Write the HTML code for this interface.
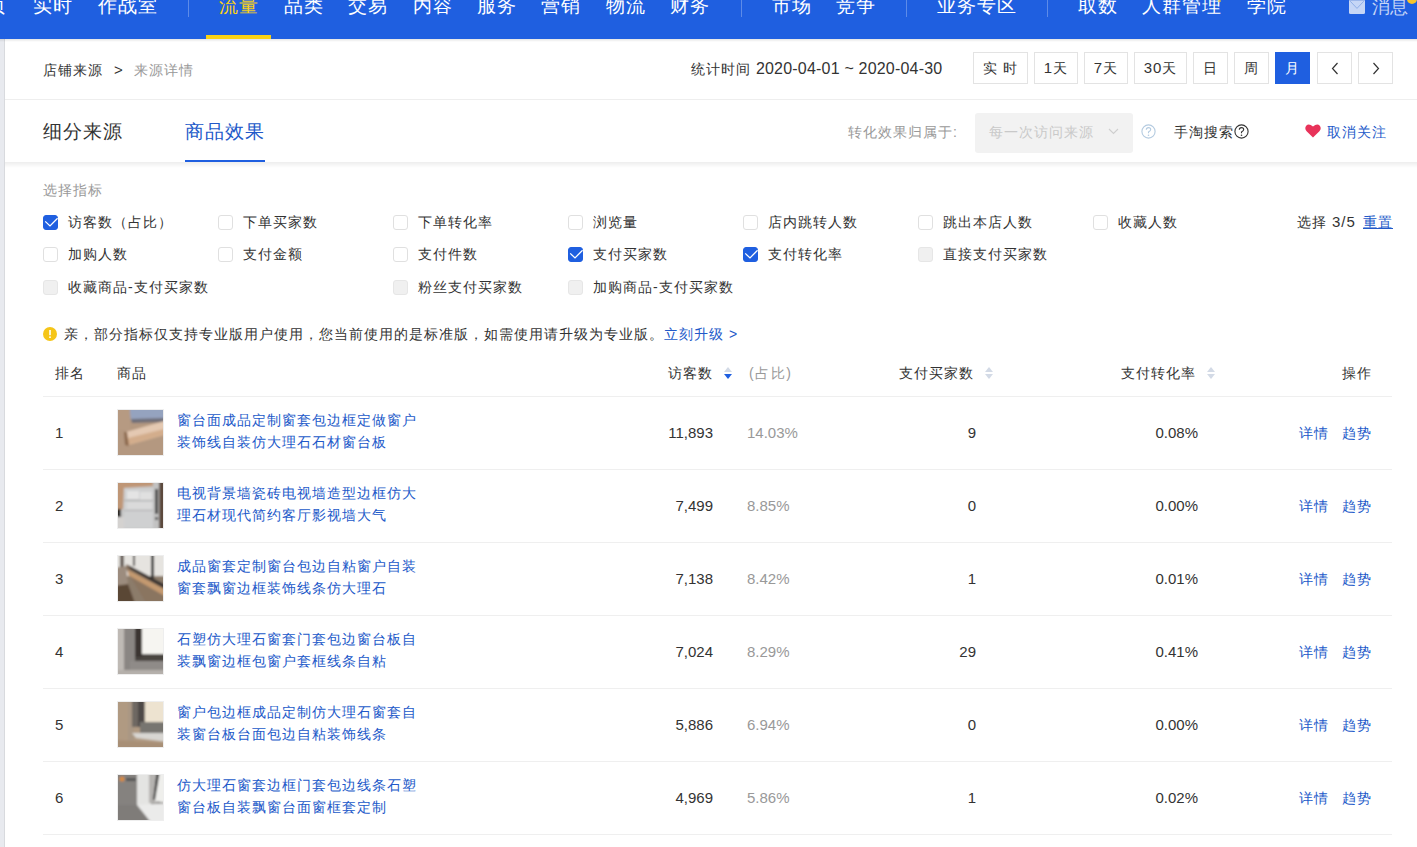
<!DOCTYPE html>
<html><head><meta charset="utf-8">
<style>
*{box-sizing:border-box;margin:0;padding:0}
html,body{width:1417px;height:847px;overflow:hidden;background:#fff;font-family:"Liberation Sans",sans-serif;color:#333}
.a{position:absolute;white-space:nowrap}
.c{font-size:14px;letter-spacing:1px;line-height:20px}
.n{font-size:15px;line-height:20px}
#nav{position:absolute;left:0;top:0;width:1417px;height:39px;background:#1f5fe0;z-index:5}
#nav .t{position:absolute;top:-6px;font-size:19px;letter-spacing:1px;line-height:24px;color:#fff;white-space:nowrap}
#nav .d{position:absolute;top:0;width:1px;height:17px;background:rgba(255,255,255,.28)}
#strip{position:absolute;left:0;top:39px;width:5px;height:808px;background:#e8eaef;border-right:1px solid #d8dade}
.btn{position:absolute;top:52px;height:32px;border:1px solid #e3e3e3;background:#fff;text-align:center;color:#333;line-height:30px}
.cb{position:absolute;width:15px;height:15px;border:1px solid #e0e0e0;border-radius:3px;background:#fff}
.cb.on{background:#1f5fe0;border-color:#1f5fe0}
.cb.dis{background:#f0f0f0;border-color:#e6e6e6}
.gry{color:#999}
.lnk{color:#2259c9}
.row{position:absolute;left:43px;width:1349px;height:1px;background:#efefef}
.ttl{position:absolute;left:177px;font-size:14px;letter-spacing:1px;line-height:21.5px;color:#2259c9;white-space:nowrap}
.img{position:absolute;left:117px;width:47px;height:47px;border:1px solid #eee;overflow:hidden}
.sort{position:absolute;width:8px;height:13px}
</style></head><body>
<div id="nav">
<div class="t" style="left:-13px">页</div>
<div class="t" style="left:33px">实时</div>
<div class="t" style="left:98px">作战室</div>
<div class="d" style="left:188px"></div>
<div class="t" style="left:219px;color:#fad214">流量</div>
<div class="t" style="left:284px">品类</div>
<div class="t" style="left:348px">交易</div>
<div class="t" style="left:413px">内容</div>
<div class="t" style="left:477px">服务</div>
<div class="t" style="left:541px">营销</div>
<div class="t" style="left:606px">物流</div>
<div class="t" style="left:670px">财务</div>
<div class="d" style="left:741px"></div>
<div class="t" style="left:772px">市场</div>
<div class="t" style="left:836px">竞争</div>
<div class="d" style="left:906px"></div>
<div class="t" style="left:937px">业务专区</div>
<div class="d" style="left:1047px"></div>
<div class="t" style="left:1078px">取数</div>
<div class="t" style="left:1142px">人群管理</div>
<div class="t" style="left:1247px">学院</div>
<div style="position:absolute;left:206px;top:35px;width:65px;height:4px;background:#fad214"></div>
<svg style="position:absolute;left:1349px;top:0" width="16" height="14" viewBox="0 0 16 14"><path d="M0 0 H16 V12.5 Q16 14 14.5 14 H1.5 Q0 14 0 12.5Z" fill="#c6d6f6"/><rect x="0" y="0" width="16" height="1" fill="#9db7ea"/><path d="M1.2 1.2 L8 8.4 L14.8 1.2" fill="none" stroke="#8eaee8" stroke-width="1"/></svg>
<div class="t" style="left:1372px;top:-5px;font-size:18px;letter-spacing:0;color:#c6d6f6">消息</div>
<div style="position:absolute;left:1407px;top:-6px;width:10px;height:10px;border-radius:50%;background:#f7c52b"></div>
<div style="position:absolute;left:1218px;top:0;width:3px;height:2px;border-radius:1px;background:#e8c43a;opacity:.8"></div>
</div>
<div style="position:absolute;left:0;top:39px;width:1417px;height:3px;background:linear-gradient(rgba(0,0,0,.10),rgba(0,0,0,0));z-index:4"></div>
<div id="strip"></div>
<div class="a c" style="left:43px;top:60px">店铺来源</div>
<div class="a n" style="left:114px;top:60px">&gt;</div>
<div class="a c gry" style="left:134px;top:60px">来源详情</div>
<div class="a c" style="left:691px;top:59px">统计时间 <span style="font-size:16px;letter-spacing:.2px">2020-04-01 ~ 2020-04-30</span></div>
<div class="btn" style="left:973px;width:55px"><span class="c" style="line-height:30px">实&nbsp;时</span></div>
<div class="btn" style="left:1034px;width:44px"><span class="c" style="line-height:30px"><span class="n">1</span>天</span></div>
<div class="btn" style="left:1084px;width:44px"><span class="c" style="line-height:30px"><span class="n">7</span>天</span></div>
<div class="btn" style="left:1134px;width:53px"><span class="c" style="line-height:30px"><span class="n">30</span>天</span></div>
<div class="btn" style="left:1193px;width:35px"><span class="c" style="line-height:30px">日</span></div>
<div class="btn" style="left:1234px;width:35px"><span class="c" style="line-height:30px">周</span></div>
<div class="btn" style="left:1275px;width:35px;background:#1f5fe0;border-color:#1f5fe0;color:#fff"><span class="c" style="line-height:30px">月</span></div>
<div class="btn" style="left:1317px;width:35px"><svg width="8" height="13" style="position:absolute;left:13px;top:9px"><path d="M6.5 1 L1.5 6.5 L6.5 12" fill="none" stroke="#333" stroke-width="1.2"/></svg></div>
<div class="btn" style="left:1358px;width:35px"><svg width="8" height="13" style="position:absolute;left:13px;top:9px"><path d="M1.5 1 L6.5 6.5 L1.5 12" fill="none" stroke="#333" stroke-width="1.2"/></svg></div>
<div style="position:absolute;left:5px;top:99px;width:1412px;height:1px;background:#eeeeee"></div>
<div class="a" style="left:43px;top:118px;font-size:19px;letter-spacing:1px;line-height:28px;color:#333">细分来源</div>
<div class="a" style="left:185px;top:118px;font-size:19px;letter-spacing:1px;line-height:28px;color:#2259c9">商品效果</div>
<div style="position:absolute;left:185px;top:160px;width:80px;height:2px;background:#1f5fe0;z-index:2"></div>
<div style="position:absolute;left:5px;top:162px;width:1412px;height:6px;background:linear-gradient(rgba(0,0,0,.07),rgba(0,0,0,0))"></div>
<div class="a c gry" style="left:848px;top:122px">转化效果归属于:</div>
<div style="position:absolute;left:975px;top:113px;width:158px;height:40px;background:#f2f2f2;border-radius:3px"></div>
<div class="a c" style="left:989px;top:122px;color:#c9c9c9">每一次访问来源</div>
<svg style="position:absolute;left:1108px;top:128px" width="11" height="7"><path d="M1 1 L5.5 5.5 L10 1" fill="none" stroke="#cfcfcf" stroke-width="1.1"/></svg>
<svg style="position:absolute;left:1141px;top:124px" width="15" height="15" viewBox="0 0 15 15"><circle cx="7.5" cy="7.5" r="6.6" fill="none" stroke="#b4cbe0" stroke-width="1.1"/><path d="M5.3 5.8 Q5.3 3.6 7.5 3.6 Q9.7 3.6 9.7 5.6 Q9.7 6.9 7.5 7.9 V9.2" fill="none" stroke="#b4cbe0" stroke-width="1.1"/><circle cx="7.5" cy="11.2" r=".8" fill="#b4cbe0"/></svg>
<div class="a c" style="left:1174px;top:122px">手淘搜索</div>
<svg style="position:absolute;left:1234px;top:124px" width="15" height="15" viewBox="0 0 15 15"><circle cx="7.5" cy="7.5" r="6.6" fill="none" stroke="#333" stroke-width="1.1"/><path d="M5.3 5.8 Q5.3 3.6 7.5 3.6 Q9.7 3.6 9.7 5.6 Q9.7 6.9 7.5 7.9 V9.2" fill="none" stroke="#333" stroke-width="1.1"/><circle cx="7.5" cy="11.2" r=".8" fill="#333"/></svg>
<svg style="position:absolute;left:1305px;top:124px" width="16" height="14" viewBox="0 0 16 14"><path d="M8 13.5 L1.6 7.2 Q-.8 4.6 1.2 1.8 Q3.8 -1 8 2.6 Q12.2 -1 14.8 1.8 Q16.8 4.6 14.4 7.2Z" fill="#e8335a"/></svg>
<div class="a c lnk" style="left:1327px;top:122px">取消关注</div>
<div class="a c gry" style="left:43px;top:180px">选择指标</div>
<div class="cb on" style="left:43px;top:215px"><svg width="15" height="15" style="position:absolute;left:-1px;top:-1px"><path d="M2.2 6.4 L7 10.9 L14.6 3.3" fill="none" stroke="#fff" stroke-width="1.3"/></svg></div><div class="a c" style="left:68px;top:212px">访客数（占比）</div>
<div class="cb " style="left:218px;top:215px"></div><div class="a c" style="left:243px;top:212px">下单买家数</div>
<div class="cb " style="left:393px;top:215px"></div><div class="a c" style="left:418px;top:212px">下单转化率</div>
<div class="cb " style="left:568px;top:215px"></div><div class="a c" style="left:593px;top:212px">浏览量</div>
<div class="cb " style="left:743px;top:215px"></div><div class="a c" style="left:768px;top:212px">店内跳转人数</div>
<div class="cb " style="left:918px;top:215px"></div><div class="a c" style="left:943px;top:212px">跳出本店人数</div>
<div class="cb " style="left:1093px;top:215px"></div><div class="a c" style="left:1118px;top:212px">收藏人数</div>
<div class="cb " style="left:43px;top:247px"></div><div class="a c" style="left:68px;top:244px">加购人数</div>
<div class="cb " style="left:218px;top:247px"></div><div class="a c" style="left:243px;top:244px">支付金额</div>
<div class="cb " style="left:393px;top:247px"></div><div class="a c" style="left:418px;top:244px">支付件数</div>
<div class="cb on" style="left:568px;top:247px"><svg width="15" height="15" style="position:absolute;left:-1px;top:-1px"><path d="M2.2 6.4 L7 10.9 L14.6 3.3" fill="none" stroke="#fff" stroke-width="1.3"/></svg></div><div class="a c" style="left:593px;top:244px">支付买家数</div>
<div class="cb on" style="left:743px;top:247px"><svg width="15" height="15" style="position:absolute;left:-1px;top:-1px"><path d="M2.2 6.4 L7 10.9 L14.6 3.3" fill="none" stroke="#fff" stroke-width="1.3"/></svg></div><div class="a c" style="left:768px;top:244px">支付转化率</div>
<div class="cb dis" style="left:918px;top:247px"></div><div class="a c" style="left:943px;top:244px">直接支付买家数</div>
<div class="cb dis" style="left:43px;top:280px"></div><div class="a c" style="left:68px;top:277px">收藏商品-支付买家数</div>
<div class="cb dis" style="left:393px;top:280px"></div><div class="a c" style="left:418px;top:277px">粉丝支付买家数</div>
<div class="cb dis" style="left:568px;top:280px"></div><div class="a c" style="left:593px;top:277px">加购商品-支付买家数</div>
<div class="a c" style="left:1297px;top:212px">选择 <span style="font-size:15px;letter-spacing:1px">3/5</span></div>
<div class="a c lnk" style="left:1363px;top:212px;text-decoration:underline">重置</div>
<svg style="position:absolute;left:43px;top:327px" width="14" height="14" viewBox="0 0 14 14"><circle cx="7" cy="7" r="7" fill="#f5c518"/><rect x="6.2" y="3" width="1.6" height="5.2" fill="#fff"/><rect x="6.2" y="9.4" width="1.6" height="1.6" fill="#fff"/></svg>
<div class="a c" style="left:64px;top:324px">亲，部分指标仅支持专业版用户使用，您当前使用的是标准版，如需使用请升级为专业版。<span class="lnk">立刻升级 &gt;</span></div>
<div class="a c" style="left:55px;top:363px">排名</div><div class="a c" style="left:117px;top:363px">商品</div>
<div class="a c" style="left:668px;top:363px">访客数</div><svg class="sort" style="left:724px;top:367px" viewBox="0 0 8 13"><path d="M0 5 L4 0 L8 5Z" fill="#d3dae6"/><path d="M0 7 L8 7 L4 12Z" fill="#1f5fe0"/></svg><div class="a c gry" style="left:749px;top:363px;letter-spacing:1.5px">(占比)</div>
<div class="a c" style="left:899px;top:363px">支付买家数</div><svg class="sort" style="left:985px;top:367px" viewBox="0 0 8 13"><path d="M0 5 L4 0 L8 5Z" fill="#d3dae6"/><path d="M0 7 L8 7 L4 12Z" fill="#d3dae6"/></svg>
<div class="a c" style="left:1121px;top:363px">支付转化率</div><svg class="sort" style="left:1207px;top:367px" viewBox="0 0 8 13"><path d="M0 5 L4 0 L8 5Z" fill="#d3dae6"/><path d="M0 7 L8 7 L4 12Z" fill="#d3dae6"/></svg>
<div class="a c" style="left:1342px;top:363px">操作</div>
<div class="row" style="top:396px"></div>
<div class="a n" style="left:55px;top:423px">1</div>
<div class="img" style="top:409px"><svg width="45" height="45" style="display:block"><filter id="bl0" x="-5" y="-5" width="55" height="55" filterUnits="userSpaceOnUse"><feGaussianBlur stdDeviation=".9"/></filter><g filter="url(#bl0)"><rect x="-5" y="-5" width="55" height="55" fill="#b49880"/><polygon points="11,-5 50,-5 50,9 13,11" fill="#95a3bf"/><polygon points="13,9 50,8 50,12 14,13" fill="#6f6e78"/><polygon points="8,22 50,10 50,24 10,35" fill="#e4c9b2"/><polygon points="10,28 50,18 50,24 10,35" fill="#d3ad8c"/><polygon points="6,22 9,22 11,36 7,35" fill="#8d6b4f"/><rect x="-5" y="-5" width="17" height="25" fill="#b69a82"/></g></svg></div>
<div class="ttl" style="top:410px">窗台面成品定制窗套包边框定做窗户<br>装饰线自装仿大理石石材窗台板</div>
<div class="a n" style="right:704px;top:423px">11,893</div>
<div class="a n gry" style="left:747px;top:423px">14.03%</div>
<div class="a n" style="right:441px;top:423px">9</div>
<div class="a n" style="right:219px;top:423px">0.08%</div>
<div class="a c lnk" style="left:1299px;top:423px">详情</div><div class="a c lnk" style="left:1342px;top:423px">趋势</div>
<div class="row" style="top:469px"></div>
<div class="a n" style="left:55px;top:496px">2</div>
<div class="img" style="top:482px"><svg width="45" height="45" style="display:block"><filter id="bl1" x="-5" y="-5" width="55" height="55" filterUnits="userSpaceOnUse"><feGaussianBlur stdDeviation=".9"/></filter><g filter="url(#bl1)"><rect x="-5" y="-5" width="55" height="55" fill="#c6c6c6"/><polygon points="-5,-5 36,-5 36,3 6,5 5,26 -5,28" fill="#bf9676"/><rect x="6" y="5" width="30" height="40" fill="#cfd0d1"/><rect x="9" y="8" width="12" height="8" fill="#e4e4e4"/><rect x="22" y="9" width="12" height="8" fill="#e0e0e0"/><rect x="6" y="17" width="30" height="1" fill="#a8a8a8"/><rect x="9" y="19" width="25" height="7" fill="#dadada"/><rect x="6" y="27" width="30" height="1" fill="#b0b0b0"/><rect x="35" y="-5" width="6" height="55" fill="#c2c2c2"/><rect x="37" y="6" width="3" height="25" fill="#3c3c3c"/><rect x="37" y="34" width="3" height="3" fill="#555"/><rect x="41" y="-5" width="9" height="55" fill="#5c4a3c"/><rect x="-5" y="26" width="8" height="8" fill="#2f2a28"/><rect x="-5" y="34" width="11" height="16" fill="#d4d2d0"/></g></svg></div>
<div class="ttl" style="top:483px">电视背景墙瓷砖电视墙造型边框仿大<br>理石材现代简约客厅影视墙大气</div>
<div class="a n" style="right:704px;top:496px">7,499</div>
<div class="a n gry" style="left:747px;top:496px">8.85%</div>
<div class="a n" style="right:441px;top:496px">0</div>
<div class="a n" style="right:219px;top:496px">0.00%</div>
<div class="a c lnk" style="left:1299px;top:496px">详情</div><div class="a c lnk" style="left:1342px;top:496px">趋势</div>
<div class="row" style="top:542px"></div>
<div class="a n" style="left:55px;top:569px">3</div>
<div class="img" style="top:555px"><svg width="45" height="45" style="display:block"><filter id="bl2" x="-5" y="-5" width="55" height="55" filterUnits="userSpaceOnUse"><feGaussianBlur stdDeviation=".9"/></filter><g filter="url(#bl2)"><rect x="-5" y="-5" width="55" height="55" fill="#8c7b6a"/><rect x="-5" y="-5" width="55" height="25" fill="#e6e4e0"/><rect x="2" y="-5" width="4" height="17" fill="#6a625c"/><rect x="15" y="-5" width="2" height="15" fill="#4a4440"/><rect x="33" y="-5" width="3" height="29" fill="#333"/><polygon points="8,8 50,31 50,50 30,50 8,13" fill="#8a7561"/><polygon points="10,9 50,30 50,35 12,13" fill="#3a3430"/><polygon points="10,14 50,35 50,42 10,19" fill="#c49a70"/><polygon points="-5,30 10,28 18,50 -5,50" fill="#5a4636"/><polygon points="-5,12 8,10 10,28 -5,30" fill="#9c8c7e"/></g></svg></div>
<div class="ttl" style="top:556px">成品窗套定制窗台包边自粘窗户自装<br>窗套飘窗边框装饰线条仿大理石</div>
<div class="a n" style="right:704px;top:569px">7,138</div>
<div class="a n gry" style="left:747px;top:569px">8.42%</div>
<div class="a n" style="right:441px;top:569px">1</div>
<div class="a n" style="right:219px;top:569px">0.01%</div>
<div class="a c lnk" style="left:1299px;top:569px">详情</div><div class="a c lnk" style="left:1342px;top:569px">趋势</div>
<div class="row" style="top:615px"></div>
<div class="a n" style="left:55px;top:642px">4</div>
<div class="img" style="top:628px"><svg width="45" height="45" style="display:block"><filter id="bl3" x="-5" y="-5" width="55" height="55" filterUnits="userSpaceOnUse"><feGaussianBlur stdDeviation=".9"/></filter><g filter="url(#bl3)"><rect x="-5" y="-5" width="55" height="55" fill="#bfbab5"/><rect x="6" y="-5" width="11" height="55" fill="#8a8683"/><rect x="17" y="-5" width="7" height="33" fill="#3a3633"/><rect x="24" y="-5" width="26" height="30" fill="#f6f5f1"/><rect x="24" y="25" width="26" height="6" fill="#4a4440"/><rect x="17" y="28" width="33" height="4" fill="#4a4440"/><rect x="12" y="32" width="38" height="9" fill="#8f8b88"/><rect x="-5" y="41" width="55" height="9" fill="#b5b0ab"/></g></svg></div>
<div class="ttl" style="top:629px">石塑仿大理石窗套门套包边窗台板自<br>装飘窗边框包窗户套框线条自粘</div>
<div class="a n" style="right:704px;top:642px">7,024</div>
<div class="a n gry" style="left:747px;top:642px">8.29%</div>
<div class="a n" style="right:441px;top:642px">29</div>
<div class="a n" style="right:219px;top:642px">0.41%</div>
<div class="a c lnk" style="left:1299px;top:642px">详情</div><div class="a c lnk" style="left:1342px;top:642px">趋势</div>
<div class="row" style="top:688px"></div>
<div class="a n" style="left:55px;top:715px">5</div>
<div class="img" style="top:701px"><svg width="45" height="45" style="display:block"><filter id="bl4" x="-5" y="-5" width="55" height="55" filterUnits="userSpaceOnUse"><feGaussianBlur stdDeviation=".9"/></filter><g filter="url(#bl4)"><rect x="-5" y="-5" width="55" height="55" fill="#b09a82"/><rect x="10" y="-5" width="6" height="55" fill="#a99784"/><rect x="14" y="-5" width="14" height="30" fill="#6e6862"/><rect x="20" y="-5" width="6" height="30" fill="#4e4a46"/><rect x="27" y="-5" width="23" height="26" fill="#ede3d0"/><rect x="22" y="20" width="28" height="12" fill="#77746f"/><polygon points="14,31 50,31 50,40 18,36" fill="#d8d6d2"/><polygon points="-5,38 50,41 50,50 -5,50" fill="#a88f76"/></g></svg></div>
<div class="ttl" style="top:702px">窗户包边框成品定制仿大理石窗套自<br>装窗台板台面包边自粘装饰线条</div>
<div class="a n" style="right:704px;top:715px">5,886</div>
<div class="a n gry" style="left:747px;top:715px">6.94%</div>
<div class="a n" style="right:441px;top:715px">0</div>
<div class="a n" style="right:219px;top:715px">0.00%</div>
<div class="a c lnk" style="left:1299px;top:715px">详情</div><div class="a c lnk" style="left:1342px;top:715px">趋势</div>
<div class="row" style="top:761px"></div>
<div class="a n" style="left:55px;top:788px">6</div>
<div class="img" style="top:774px"><svg width="45" height="45" style="display:block"><filter id="bl5" x="-5" y="-5" width="55" height="55" filterUnits="userSpaceOnUse"><feGaussianBlur stdDeviation=".9"/></filter><g filter="url(#bl5)"><rect x="-5" y="-5" width="55" height="55" fill="#8a8784"/><rect x="-5" y="-5" width="24" height="55" fill="#85827f"/><rect x="19" y="-5" width="14" height="55" fill="#e4e4e2"/><rect x="31" y="-5" width="8" height="33" fill="#b5b3b0"/><polygon points="39,-5 42,-5 37,25 35,25" fill="#2a2a2a"/><polygon points="42,-5 50,-5 50,28 37,26" fill="#efefec"/><polygon points="19,30 50,28 50,50 35,50" fill="#ebebea"/><polygon points="-5,30 19,30 35,50 -5,50" fill="#7f7c79"/><circle cx="4" cy="4" r="2.5" fill="#d98a3a"/><rect x="8" y="3" width="10" height="3" fill="#555"/></g></svg></div>
<div class="ttl" style="top:775px">仿大理石窗套边框门套包边线条石塑<br>窗台板自装飘窗台面窗框套定制</div>
<div class="a n" style="right:704px;top:788px">4,969</div>
<div class="a n gry" style="left:747px;top:788px">5.86%</div>
<div class="a n" style="right:441px;top:788px">1</div>
<div class="a n" style="right:219px;top:788px">0.02%</div>
<div class="a c lnk" style="left:1299px;top:788px">详情</div><div class="a c lnk" style="left:1342px;top:788px">趋势</div>
<div class="row" style="top:834px"></div>
</body></html>
